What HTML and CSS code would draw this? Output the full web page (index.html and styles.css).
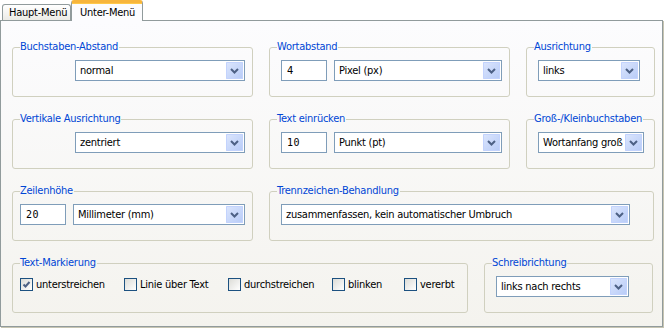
FILE: index.html
```html
<!DOCTYPE html>
<html lang="de">
<head>
    <meta charset="UTF-8">
    <title>Schrift-Einstellungen</title>
    <link rel="stylesheet" href="styles.css">
</head>
<body>
    <div class="tabs">
        <div class="tab">Haupt-Menü</div>
        <div class="tab active">Unter-Menü</div>
    </div>

    <div class="panel">
        <div class="row">
            <fieldset class="group wide">
                <legend>Buchstaben-Abstand</legend>
                <div class="body right">
                    <div class="combo w170"><span>normal</span><i class="btn"><svg width="9" height="6" viewBox="0 0 9 6"><path d="M1 1l3.5 3.5L8 1" fill="none" stroke="#4d6185" stroke-width="2"/></svg></i></div>
                </div>
            </fieldset>
            <fieldset class="group wide">
                <legend>Wortabstand</legend>
                <div class="body">
                    <div class="edit">4</div>
                    <div class="combo w168"><span>Pixel (px)</span><i class="btn"><svg width="9" height="6" viewBox="0 0 9 6"><path d="M1 1l3.5 3.5L8 1" fill="none" stroke="#4d6185" stroke-width="2"/></svg></i></div>
                </div>
            </fieldset>
            <fieldset class="group narrow">
                <legend>Ausrichtung</legend>
                <div class="body">
                    <div class="combo w102"><span>links</span><i class="btn"><svg width="9" height="6" viewBox="0 0 9 6"><path d="M1 1l3.5 3.5L8 1" fill="none" stroke="#4d6185" stroke-width="2"/></svg></i></div>
                </div>
            </fieldset>
        </div>

        <div class="row">
            <fieldset class="group wide">
                <legend>Vertikale Ausrichtung</legend>
                <div class="body right">
                    <div class="combo w170"><span>zentriert</span><i class="btn"><svg width="9" height="6" viewBox="0 0 9 6"><path d="M1 1l3.5 3.5L8 1" fill="none" stroke="#4d6185" stroke-width="2"/></svg></i></div>
                </div>
            </fieldset>
            <fieldset class="group wide">
                <legend>Text einrücken</legend>
                <div class="body">
                    <div class="edit mono">10</div>
                    <div class="combo w168"><span>Punkt (pt)</span><i class="btn"><svg width="9" height="6" viewBox="0 0 9 6"><path d="M1 1l3.5 3.5L8 1" fill="none" stroke="#4d6185" stroke-width="2"/></svg></i></div>
                </div>
            </fieldset>
            <fieldset class="group narrow">
                <legend>Groß-/Kleinbuchstaben</legend>
                <div class="body">
                    <div class="combo w106"><span>Wortanfang groß</span><i class="btn"><svg width="9" height="6" viewBox="0 0 9 6"><path d="M1 1l3.5 3.5L8 1" fill="none" stroke="#4d6185" stroke-width="2"/></svg></i></div>
                </div>
            </fieldset>
        </div>

        <div class="row">
            <fieldset class="group wide">
                <legend>Zeilenhöhe</legend>
                <div class="body tight">
                    <div class="edit mono">20</div>
                    <div class="combo w172"><span>Millimeter (mm)</span><i class="btn"><svg width="9" height="6" viewBox="0 0 9 6"><path d="M1 1l3.5 3.5L8 1" fill="none" stroke="#4d6185" stroke-width="2"/></svg></i></div>
                </div>
            </fieldset>
            <fieldset class="group double">
                <legend>Trennzeichen-Behandlung</legend>
                <div class="body">
                    <div class="combo w349"><span>zusammenfassen, kein automatischer Umbruch</span><i class="btn"><svg width="9" height="6" viewBox="0 0 9 6"><path d="M1 1l3.5 3.5L8 1" fill="none" stroke="#4d6185" stroke-width="2"/></svg></i></div>
                </div>
            </fieldset>
        </div>

        <div class="row">
            <fieldset class="group marks">
                <legend>Text-Markierung</legend>
                <div class="body tight checks">
                    <label class="check"><i class="box"><svg width="11" height="11" viewBox="0 0 11 11"><path d="M2.5 5.5l2 2 4-4.5" fill="none" stroke="#4d6185" stroke-width="2"/></svg></i>unterstreichen</label>
                    <label class="check"><i class="box"></i>Linie über Text</label>
                    <label class="check"><i class="box"></i>durchstreichen</label>
                    <label class="check short"><i class="box"></i>blinken</label>
                    <label class="check last"><i class="box"></i>vererbt</label>
                </div>
            </fieldset>
            <fieldset class="group dir">
                <legend>Schreibrichtung</legend>
                <div class="body">
                    <div class="combo w133"><span>links nach rechts</span><i class="btn"><svg width="9" height="6" viewBox="0 0 9 6"><path d="M1 1l3.5 3.5L8 1" fill="none" stroke="#4d6185" stroke-width="2"/></svg></i></div>
                </div>
            </fieldset>
        </div>
    </div>
</body>
</html>
```

FILE: styles.css
```css
body {
    margin: 0;
    width: 665px;
    height: 329px;
    background: #ffffff;
    font-family: "DejaVu Sans Condensed", "DejaVu Sans", sans-serif;
    font-size: 11px;
    letter-spacing: -0.25px;
    color: #000;
}

/* tabs */

.tabs {
    display: flex;
    align-items: flex-end;
    height: 20px;
    padding-left: 2px;
}

.tab {
    box-sizing: border-box;
    width: 69px;
    height: 16px;
    padding: 1px 0 0 6px;
    border: 1px solid #919b9c;
    border-bottom: none;
    border-radius: 3px 3px 0 0;
    background: linear-gradient(#ffffff, #ecebe6);
    line-height: 13px;
}

.tab.active {
    position: relative;
    z-index: 1;
    width: 72px;
    height: 21px;
    margin-bottom: -1px;
    padding: 3px 0 0 8px;
    border-top: 3px solid #f7b53c;
    border-radius: 3px 3px 0 0;
    background: #fcfcfe;
    box-shadow: inset 0 1px 0 #ffc84a;
}

/* panel */

.panel {
    box-sizing: border-box;
    width: 663px;
    height: 307px;
    padding: 19px 9px 0 11px;
    border: 1px solid #919b9c;
    background: linear-gradient(#fcfcfe, #f4f3ee);
    box-shadow: 1px 1px 0 #c7c5b2;
}

.row {
    display: flex;
    gap: 16px;
    margin-bottom: 15px;
}

.group {
    box-sizing: border-box;
    flex: none;
    min-width: 0;
    margin: 0;
    padding: 0;
    height: 57px;
    border: 1px solid #d0d0bf;
    border-radius: 3px;
}

.group legend {
    margin-left: 7px;
    padding: 0 1px 2px 0;
    line-height: 13px;
    color: #0046d5;
}

.wide { width: 241px; }
.narrow { width: 129px; }
.double { width: 385px; }
.marks { width: 456px; }
.dir { width: 169px; }

.body {
    display: flex;
    gap: 7px;
    padding: 5px 0 0 11px;
}

.body.right {
    justify-content: flex-end;
    padding-right: 7px;
}

.body.tight {
    padding-left: 7px;
}

/* controls */

.edit {
    box-sizing: border-box;
    width: 46px;
    height: 21px;
    padding: 3px 0 0 5px;
    border: 1px solid #7f9db9;
    background: #fff;
    line-height: 13px;
}

.edit.mono {
    font-family: "DejaVu Sans Mono", monospace;
    font-size: 10px;
    letter-spacing: 0.5px;
}

.combo {
    box-sizing: border-box;
    display: flex;
    align-items: center;
    justify-content: space-between;
    height: 21px;
    padding: 1px 1px 1px 4px;
    border: 1px solid #7f9db9;
    background: #fff;
    line-height: 13px;
    white-space: nowrap;
}

.w102 { width: 102px; }
.w106 { width: 106px; }
.w133 { width: 133px; }
.w168 { width: 168px; }
.w170 { width: 170px; }
.w172 { width: 172px; }
.w349 { width: 349px; }

.btn {
    display: flex;
    align-items: center;
    justify-content: center;
    flex: none;
    width: 17px;
    height: 17px;
    border-radius: 1px;
    background: linear-gradient(135deg, #dce6fd, #b7cbf7);
    box-shadow: inset 0 0 0 1px #c3d3fd;
}

/* checkboxes */

.checks {
    gap: 0;
    padding-top: 7px;
}

.check {
    display: flex;
    align-items: center;
    width: 104px;
    height: 13px;
    line-height: 13px;
}

.check.short {
    width: 72px;
}

.check.last {
    width: auto;
}

.box {
    box-sizing: border-box;
    display: flex;
    align-items: center;
    justify-content: center;
    width: 13px;
    height: 13px;
    margin-right: 3px;
    border: 1px solid #1c5180;
    background: linear-gradient(135deg, #dcdcd7, #ffffff);
}
```
